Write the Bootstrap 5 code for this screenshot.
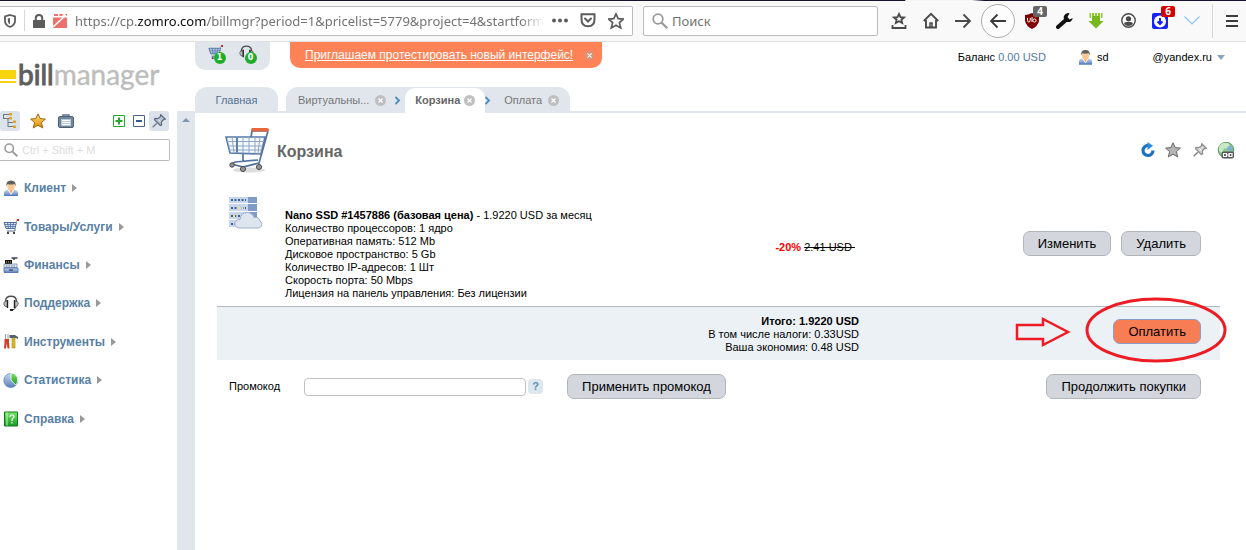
<!DOCTYPE html>
<html lang="ru">
<head>
<meta charset="utf-8">
<meta name="viewport" content="width=device-width, initial-scale=1">
<title>Корзина — billmanager</title>
<link rel="stylesheet" href="https://cdn.jsdelivr.net/npm/bootstrap@5.3.0/dist/css/bootstrap.min.css">
<style>
:root { --panel: #e1e6ed; --blue: #587fa6; }
body { font: 11px/13px "Liberation Sans", Arial, sans-serif; color: #000; background: #fff; }
svg { display: block; flex: none; }
button { color: inherit; }
.plain { border: 0; background: none; padding: 0; display: flex; align-items: center; justify-content: center; }

/* browser toolbar */
.chrome { height: 42px; background: #f9f9fa; border-bottom: 1px solid #dfdfe0; font: 13px/20px "Noto Sans", sans-serif; color: #737373; position: relative; }
.strip { position: absolute; top: 0; left: 0; right: 0; height: 1px; background: linear-gradient(90deg, #15142c 72.6%, #f5f5f5 72.7% 78%, #15142c 79%); }
.urlbox { height: 30px; background: #fff; border: 1px solid #bcbcbc; border-left: 0; border-radius: 0 2px 2px 0; min-width: 0; }
.findbox { height: 30px; width: 235px; flex: none; margin: 0 5px 0 10px; background: #fff; border: 1px solid #bcbcbc; border-radius: 2px; }
.findbox input { font: inherit; border: 0; outline: 0; background: none; min-width: 0; padding: 0; }
.findbox input::placeholder { color: #737373; opacity: 1; }
.address { font-size: 13px; white-space: nowrap; overflow: hidden; min-width: 0; -webkit-mask-image: linear-gradient(90deg, #000 95%, transparent); mask-image: linear-gradient(90deg, #000 95%, transparent); }
.address b { font-weight: 400; color: #0c0c0d; }
.rule { width: 1px; height: 34px; background: #d7d7db; flex: none; }
.tool { width: 32px; height: 34px; flex: none; color: #4a4a4a; position: relative; }
.tool-back { width: 37px; }
.tool-menu { width: 29px; }
.tool-back span { width: 34px; height: 34px; border: 1px solid #adadad; border-radius: 50%; background: #fdfdfd; display: flex; align-items: center; justify-content: center; }
.count { position: absolute; top: 2px; right: 1px; width: 14px; height: 11px; border-radius: 2px; background: #666; color: #fff; font: 700 10px/11px "Noto Sans", sans-serif; text-align: center; }
.count-red { background: #d70000; }

/* left side */
.side { width: 195px; flex: none; }
.brand { height: 69px; font: 28px/32px Lato, sans-serif; color: #bdbdbd; text-decoration: none; padding-top: 16px; -webkit-text-stroke: 0.4px #bdbdbd; }
.brand b { font-weight: 400; color: #5e5e5e; -webkit-text-stroke: 1px #5e5e5e; }
.brand i { width: 16px; height: 13px; margin: 12px 2px 0 0; background: linear-gradient(#f8d40f 9px, #fff 9px 11px, #f8d40f 11px); }
.splitter { width: 18px; background: var(--panel); }
.splitter::before { content: ""; display: block; width: 0; margin: 7px 5px; border: 4px solid transparent; border-top: 0; border-bottom-color: #7f97b5; }
.sq { width: 20px; height: 20px; border-radius: 3px; }
.sq-on { background: #dbe2eb; }
.lookup { height: 22px; width: 170px; border: 1px solid #bababa; border-left: 0; border-radius: 0 2px 2px 0; }
.lookup input { border: 0; outline: 0; width: 130px; font: inherit; }
.lookup input::placeholder { color: #dcdcdc; opacity: 1; }
.menu { height: 269px; display: grid; grid-auto-rows: 1fr; }
.menu a { color: var(--blue); font: 700 12px/16px "Liberation Sans", Arial, sans-serif; text-decoration: none; height: 100%; padding-left: 3px; }
.menu svg { width: 16px; margin-right: 5px; }
.menu a::after { content: ""; border: 4px solid transparent; border-left: 5px solid #999; border-right: 0; margin-left: 6px; }

/* top of the main area */
.topbar { height: 45px; }
.pill { width: 75px; height: 28px; background: var(--panel); border-radius: 0 0 10px 10px; }
.pill span { position: absolute; left: 6px; top: 7px; width: 12px; height: 12px; border-radius: 50%; background: #1fae2b; color: #fff; font: 700 8px/12px "DejaVu Sans", sans-serif; text-align: center; }
.notice { height: 26px; background: #ff8357; border-radius: 0 0 10px 10px; padding: 0 8px 0 15px; margin-left: 20px; gap: 12px; }
.notice a { color: #fff; font-size: 12px; }
.account { height: 30px; padding-right: 21px; }
.account a { color: #000; text-decoration: none; }
.account a.sum { color: #54789f; }
.account .who { margin: 0 44px 0 32px; }
.caret { border: 4px solid transparent; border-top: 5px solid #8ba5c0; border-bottom: 0; margin-left: 5px; }
.tabs { height: 26px; box-shadow: inset 0 -2px var(--panel); }
.tab, .tabset { background: var(--panel); border-radius: 12px 12px 0 0; height: 26px; }
.tab { width: 83px; }
.tab a, .tabset a { color: #777; text-decoration: none; }
.tab a { color: #54718f; }
.tabset { padding: 0 11px 0 12px; }
.tabset .close-tab { margin-left: 6px; }
.tabset .now { background: #fff; border-radius: 10px 10px 0 0; height: 25px; width: 80px; margin-top: 1px; }
.tabset .now a { font-weight: 700; color: #666; }

/* cart */
.page { padding: 14px 26px 0 22px; }
h1 { font: 700 16px/20px "Liberation Sans", Arial, sans-serif; color: #666; margin: 4px 0 0; }
.tools-right { margin-right: -15px; }
.cart { width: 100%; table-layout: fixed; }
.cart td { padding: 0; }
.cart .goods td { border-bottom: 1px solid #b4b9be; }
.cart .total td { background: #ecf1f6; padding: 8px 0 6px; }
.cart .desc { padding: 28px 0 6px; white-space: nowrap; }
.cart .discount { color: #f00; }
.cart .pay { padding-right: 19px !important; }
.cart .total .pay { padding: 5px 0 9px; }
.goods .buttons { gap: 10px; }
.act { height: 25px; border: 1px solid #b0b6ba; border-radius: 7px; background: #d3d7dd; font-size: 13px; line-height: 15px; padding: 0 14px; color: #000; }
.act-main { background: #f67d54; border-color: #8a9cc8; }
.pay-box { position: relative; display: inline-block; }
.pay-box svg { position: absolute; right: -27px; top: -22px; pointer-events: none; }
.promo-row { padding: 14px 19px 0 12px; }
.promo { width: 222px; height: 18px; border: 1px solid #c2c2c2; border-radius: 4px; }
.hint { width: 15px; height: 15px; margin-left: 2px; border-radius: 4px; background: #dce7ee; color: #5b92b8; font-weight: 700; }
</style>
</head>
<body class="d-flex flex-column min-vh-100">

<svg width="0" height="0" class="position-absolute" aria-hidden="true">
  <defs>
    <linearGradient id="gb" x2="0" y2="1"><stop stop-color="#c8d8ee"/><stop offset="1" stop-color="#5b80bb"/></linearGradient>
    <linearGradient id="gg" x2="0" y2="1"><stop stop-color="#7be56a"/><stop offset="1" stop-color="#159a25"/></linearGradient>
    <linearGradient id="gy" x2="0" y2="1"><stop stop-color="#ffe27a"/><stop offset="1" stop-color="#d98a00"/></linearGradient>
  </defs>
  <symbol id="user" viewBox="0 0 16 16"><path d="M1 16v-3q0-3 4-3.500h6q4 .5 4 3.500v3z" fill="url(#gb)"/><path d="M4.500 9.500 8 15l3.500-5.500z" fill="#fff"/><path d="M6 9.500 8 14l2-4.500z" fill="#f3a765"/><ellipse cx="8" cy="6" rx="3.800" ry="4.800" fill="#f9c896"/><path d="M3.500 6.500Q2.500.5 8 .5t4.500 6L11.500 4Q8 5 4.500 4z" fill="#60605c"/><path d="M1 15h14v1H1z" fill="#4c7cc0"/></symbol>
  <symbol id="basket" viewBox="0 0 16 16"><path d="M13 3 14.500.8" stroke="#99a" fill="none"/><path d="M14 0h2v2h-2z" fill="#c22"/><path d="M1 3.500h12.500L12 9.500H3z" fill="#dce7f5" stroke="#4c6ca0"/><path d="M1.500 5.500h11.500M2.500 7.500h10M4.500 3.500l1 6M7.500 3.500v6M10.500 3.500l-1 6" stroke="#4c6ca0" stroke-width=".8"/><path d="M12 9.500v2.500H4" stroke="#53658a" fill="none"/><path d="M4 13h2v2H4zM10 13h2v2h-2z" fill="#444"/></symbol>
  <symbol id="phones" viewBox="0 0 16 16"><path d="M2.500 9V6Q3 1.200 8 1.200T13.500 6v3" fill="none" stroke="#4b4b4b" stroke-width="1.400"/><path d="M4.500 6Q.5 6 .8 9t3.700 3zM11.500 6q4 0 3.700 3t-3.700 3z" fill="#b8bcc0" stroke="#333" stroke-width=".6"/><path d="M4.500 5v8M11.500 5v8" stroke="#222" stroke-width="1.400"/><path d="M13 12q-1 3-4.500 3" fill="none" stroke="#444"/><path d="M7 14h3v2H7z" fill="#222"/></symbol>
  <symbol id="star5" viewBox="0 0 16 16"><path d="M8 .8 10.200 5.600l5.200.5-4 3.500 1.300 5.300L8 12.200l-4.700 2.700 1.300-5.300-4-3.500 5.200-.5z"/></symbol>
  <symbol id="pin" viewBox="0 0 16 16"><path d="M.8 15.200 5.500 10.500" stroke="#777f88" stroke-width="1.600"/><path d="M10 .8 15.200 6l-2 .3-2.600 2.800.4 3.400-1.500.7-6.700-6.700.7-1.500 3.400.4 2.800-2.600z" stroke-width="1.400"/><path d="m7 6 3 3" stroke="#fff" stroke-width=".8"/></symbol>
  <symbol id="cross" viewBox="0 0 11 11"><circle cx="5.500" cy="5.500" r="5.500" fill="#bfbfbf"/><path d="m3.500 3.500 4 4m0-4-4 4" stroke="#fff" stroke-width="1.300"/></symbol>
  <symbol id="lens" viewBox="0 0 16 16"><circle cx="6" cy="6" r="4.800" fill="none" stroke="#999" stroke-width="1.800"/><path d="m9.500 9.500 5.700 5.700" stroke="#999" stroke-width="2.200"/></symbol>
</svg>

<header class="chrome d-flex align-items-center">
  <div class="strip"></div>
  <div class="urlbox d-flex align-items-center flex-grow-1">
    <svg class="ms-1" width="12" height="14" viewBox="0 0 12 14"><path d="M6 1 11 2.500V7q0 4-5 6-5-2-5-6V2.500z" fill="none" stroke="#5c5c5c" stroke-width="1.800"/><path d="M6 4v6.500Q3.800 9 3.800 7V4.500z" fill="#5c5c5c"/></svg>
    <span class="rule ms-2 h-75"></span>
    <svg class="ms-2" width="12" height="14" viewBox="0 0 12 14"><path d="M0 6h12v8H0z" fill="#5c5c5c"/><path d="M2.800 7V4Q2.800 1 6 1t3.200 3v3" fill="none" stroke="#5c5c5c" stroke-width="2"/></svg>
    <svg class="mx-2" width="14" height="14" viewBox="0 0 14 14"><path d="M0 3.500h14V14H0zM1 0h4v2H1zM6.500 0h4l-1.500 2h-2.500zM12 0h2v2h-2z" fill="#ea716c"/><path d="M0 13 13 1" stroke="#fff" stroke-width="1.600"/></svg>
    <div class="address flex-grow-1" role="textbox" aria-label="Адрес">https://cp.<b>zomro.com</b>/billmgr?period=1&amp;pricelist=5779&amp;project=4&amp;startform</div>
    <button class="plain ms-2" aria-label="Действия"><svg width="16" height="5" viewBox="0 0 16 5" fill="#5c5c5c"><circle cx="2" cy="2.500" r="2"/><circle cx="8" cy="2.500" r="2"/><circle cx="14" cy="2.500" r="2"/></svg></button>
    <button class="plain mx-2 px-1" aria-label="Pocket"><svg width="16" height="15" viewBox="0 0 16 15" fill="none" stroke="#5c5c5c" stroke-width="2" stroke-linecap="round"><path d="M1.500 1.200h13v5q0 7-6.500 7t-6.500-7z"/><path d="m5 5.500 3 3 3-3"/></svg></button>
    <button class="plain me-2" aria-label="Закладка"><svg width="16" height="16" viewBox="0 0 16 16"><use href="#star5" fill="none" stroke="#5c5c5c" stroke-width="1.700"/></svg></button>
  </div>
  <label class="findbox d-flex align-items-center">
    <svg class="ms-2 me-1" width="16" height="16"><use href="#lens"/></svg>
    <input type="text" placeholder="Поиск" aria-label="Поиск" size="15">
  </label>
  <button class="plain tool" aria-label="Библиотека"><svg width="16" height="18" viewBox="0 0 16 18" fill="none" stroke="#4a4a4a" stroke-width="1.800"><path d="m8 2 1.500 3.200 3.500.3-2.600 2.200.8 3.300L8 9.200 4.800 11l.8-3.300L3 5.500l3.500-.3z"/><path d="M1.500 13v3h13v-3"/></svg></button>
  <button class="plain tool" aria-label="Домой"><svg width="16" height="17" viewBox="0 0 16 17" fill="none" stroke="#4a4a4a" stroke-width="1.900"><path d="M.8 9 8 1.800 15.200 9M3 8v7.500h10V8"/><path d="M7 15.500v-4.500h2v4.500" stroke-width="1.500"/></svg></button>
  <button class="plain tool" aria-label="Вперёд"><svg width="16" height="16" viewBox="0 0 16 16" fill="none" stroke="#4a4a4a" stroke-width="1.900"><path d="M0 8h15M8.500 1.500 15 8l-6.500 6.500"/></svg></button>
  <button class="plain tool tool-back" aria-label="Назад"><span><svg width="16" height="16" viewBox="0 0 16 16" fill="none" stroke="#3c3c3c" stroke-width="1.900"><path d="M16 8H1M7.500 1.500 1 8l6.500 6.500"/></svg></span></button>
  <button class="plain tool" aria-label="uBlock"><svg width="14" height="16" viewBox="0 0 14 16"><path d="M7 0q4 2 7 2v6q-1 5-7 8-6-3-7-8V2q3 0 7-2z" fill="#800000"/><path d="M2.500 5v2.500q0 1.500 1.300 1.500T5.200 7.500V5M7 4v5" stroke="#fff" fill="none"/><circle cx="9.500" cy="7.500" r="1.600" fill="none" stroke="#fff"/></svg><span class="count">4</span></button>
  <button class="plain tool" aria-label="Инструменты"><svg width="17" height="16" viewBox="0 0 17 16"><path d="M2 14 10.500 6.500" stroke="#111" stroke-width="4" stroke-linecap="round"/><path d="M13.500.3A4.500 4.500 0 1 0 16.700 5L13.500 6.500 11.500 4z" fill="#111"/></svg></button>
  <button class="plain tool" aria-label="Загрузка"><svg width="16" height="16" viewBox="0 0 16 16"><path d="M4 3h8v5h3.500L8 15.500.5 8H4z" fill="#77b81e"/><path d="M1.500 0H3v5H1.500zM4 0h2v3H4zM7 0h2v3H7zM10 0h2v3h-2zM13 0h1.500v5H13z" fill="#8bcc2c"/></svg></button>
  <button class="plain tool" aria-label="Аккаунт"><svg width="15" height="15" viewBox="0 0 15 15"><circle cx="7.500" cy="7.500" r="6.700" fill="none" stroke="#4a4a4a" stroke-width="1.400"/><circle cx="7.500" cy="5.800" r="2.600" fill="#4a4a4a"/><path d="M3 11q0-2 2.500-2h4q2.500 0 2.500 2-2 2-4.500 2T3 11z" fill="#4a4a4a"/></svg></button>
  <button class="plain tool" aria-label="Менеджер загрузок"><svg width="16" height="16" viewBox="0 0 16 16"><rect width="16" height="16" rx="2" fill="#1422f5"/><circle cx="8" cy="8.500" r="6" fill="#fff"/><path d="M8 5v5M5.500 8.500 8 11l2.500-2.500" stroke="#1422f5" stroke-width="2" fill="none"/></svg><span class="count count-red">6</span></button>
  <button class="plain tool" aria-label="Ещё"><svg width="16" height="9" viewBox="0 0 16 9"><path d="m.5.5 7.500 7.500L15.500.5" fill="none" stroke="#86c6ee" stroke-width="1.200"/></svg></button>
  <span class="rule mx-1"></span>
  <button class="plain tool tool-menu" aria-label="Меню"><svg width="12" height="12" viewBox="0 0 12 12"><path d="M0 1h12M0 6h12M0 11h12" stroke="#3c3c3c" stroke-width="1.800"/></svg></button>
</header>

<div class="d-flex flex-grow-1">
  <aside class="side d-flex flex-column">
    <a class="brand d-flex align-items-start" href="#"><i></i><b>bill</b>manager</a>
    <div class="d-flex flex-grow-1">
      <div class="flex-grow-1">
        <div class="d-flex align-items-center mb-2">
          <button class="plain sq sq-on" aria-label="Дерево"><svg width="15" height="16" viewBox="0 0 15 16"><path d="M.5 1v5M1 1.500h5M1 5.500h5M5 6v8M5 9.500h5M5 13.500h5" stroke="#6c7884" fill="none"/><path d="M6 0h3v2.500H6zM6 4h3v2.500H6zM10 7.500h3V10h-3zM10 12.500h3V15h-3z" fill="#e3a51c"/></svg></button>
          <button class="plain sq mx-2" aria-label="Избранное"><svg width="16" height="16"><use href="#star5" fill="url(#gy)" stroke="#9b6510"/></svg></button>
          <button class="plain sq" aria-label="Задачи"><svg width="16" height="14" viewBox="0 0 16 14"><path d="M5 3V1h6v2" fill="none" stroke="#5d7186" stroke-width="1.400"/><rect x=".5" y="2.500" width="15" height="11" rx="1.500" fill="#71869b" stroke="#4e6276"/><path d="M3 5h10v7H3z" fill="#b6c8da"/><path d="M4 6.500h8M4 8.500h8M4 10.500h8" stroke="#fff"/></svg></button>
          <button class="plain sq ms-auto" aria-label="Развернуть"><svg width="12" height="12" viewBox="0 0 12 12"><path d="M.5.5h11v11H.5z" fill="#fff" stroke="#22a92a"/><path d="M6 2.500v7M2.500 6h7" stroke="#22a92a" stroke-width="2"/></svg></button>
          <button class="plain sq" aria-label="Свернуть"><svg width="12" height="12" viewBox="0 0 12 12"><path d="M.5.5h11v11H.5z" fill="#fff" stroke="#44648f"/><path d="M3 6h6" stroke="#34588c" stroke-width="2"/></svg></button>
          <button class="plain sq sq-on me-2" aria-label="Закрепить"><svg width="14" height="14"><use href="#pin" fill="#b8c4d2" stroke="#586a80"/></svg></button>
        </div>
        <label class="lookup d-flex align-items-center ps-1 mb-2">
          <svg width="14" height="14" class="me-1"><use href="#lens"/></svg>
          <input class="p-0" type="text" placeholder="Ctrl + Shift + M" aria-label="Поиск по меню">
        </label>
        <nav>
          <ul class="menu list-unstyled m-0">
            <li><a class="d-flex align-items-center" href="#"><svg width="16" height="16"><use href="#user"/></svg>Клиент</a></li>
            <li><a class="d-flex align-items-center" href="#"><svg width="16" height="16"><use href="#basket"/></svg>Товары/Услуги</a></li>
            <li><a class="d-flex align-items-center" href="#"><svg width="16" height="16" viewBox="0 0 14 16"><path d="M10 3V1.500M7.500 1h6" stroke="#445" stroke-width="1.600"/><path d="M1 3h7v4H1z" fill="#111"/><path d="M2 5h5" stroke="#e8c94c" stroke-dasharray="1 1"/><path d="M0 7h13v3.500H0z" fill="#e6ebf3" stroke="#6a7fa4" stroke-width=".7"/><path d="M2 9h10" stroke="#5b6e94" stroke-dasharray="1.500 1"/><path d="M0 11h14v4.500H0z" fill="url(#gb)" stroke="#4268a5" stroke-width=".8"/><path d="M5 13h4" stroke="#223"/></svg>Финансы</a></li>
            <li><a class="d-flex align-items-center" href="#"><svg width="16" height="16"><use href="#phones"/></svg>Поддержка</a></li>
            <li><a class="d-flex align-items-center" href="#"><svg width="16" height="16" viewBox="0 0 14 16"><path d="M1.500 0v6M4 0v6" stroke="#8ea0b5"/><path d="M.5 5h4.500v3l.5 6.500H3.500L2.800 9 2 14.500H0L.5 8z" fill="#d83b28"/><path d="M5.500 1H11l3 2v2l-2-1H5.500z" fill="#556170"/><path d="M8 4h3v10H8z" fill="#d9bd1e" stroke="#a68a10" stroke-width=".6"/></svg>Инструменты</a></li>
            <li><a class="d-flex align-items-center" href="#"><svg width="16" height="16" viewBox="0 0 14 16"><circle cx="6.800" cy="8.500" r="7" fill="url(#gb)" stroke="#4672b4" stroke-width=".6"/><path d="M7 8V1q6.500.5 6.700 7 0 3-2 5z" fill="url(#gg)" stroke="#fff" stroke-width=".8"/></svg>Статистика</a></li>
            <li><a class="d-flex align-items-center" href="#"><svg width="16" height="16" viewBox="0 0 14 16"><path d="M.5 1h13v14H.5z" fill="url(#gg)" stroke="#0f7d1c"/><path d="M3 1.500v13" stroke="#c7f3c2"/><path d="M6 6q0-2 2-2t2 1.700q0 1-1 1.600T8 9v1M8 11v1.500" fill="none" stroke="#fff" stroke-width="1.200"/></svg>Справка</a></li>
          </ul>
        </nav>
      </div>
      <div class="splitter"></div>
    </div>
  </aside>

  <main class="flex-grow-1">
    <div class="topbar d-flex align-items-start">
      <div class="pill d-flex align-items-center justify-content-center gap-3 pe-1 pb-2">
        <a class="position-relative" href="#" aria-label="Корзина, 1"><svg width="15" height="15"><use href="#basket"/></svg><span>1</span></a>
        <a class="position-relative" href="#" aria-label="Поддержка, 0"><svg width="15" height="15"><use href="#phones"/></svg><span>0</span></a>
      </div>
      <div class="notice d-flex align-items-center">
        <a href="#">Приглашаем протестировать новый интерфейс!</a>
        <button class="plain" aria-label="Закрыть"><svg width="9" height="9" viewBox="0 0 11 11"><circle cx="5.500" cy="5.500" r="5.500" fill="#d3937c"/><path d="m3 3 5 5m0-5-5 5" stroke="#fff" stroke-width="1.300"/></svg></button>
      </div>
      <div class="account d-flex align-items-center ms-auto">
        <span>Баланс <a class="sum" href="#">0.00 USD</a></span>
        <a class="who d-flex align-items-center gap-1" href="#"><svg width="15" height="16"><use href="#user"/></svg>sd</a>
        <a class="d-flex align-items-center" href="#">@yandex.ru<span class="caret"></span></a>
      </div>
    </div>

    <nav class="tabs d-flex">
      <div class="tab d-flex align-items-center justify-content-center me-2"><a href="#">Главная</a></div>
      <div class="tabset d-flex align-items-center">
        <a href="#">Виртуальны...</a>
        <button class="plain close-tab" aria-label="Закрыть"><svg width="11" height="11"><use href="#cross"/></svg></button>
        <svg class="ms-2 me-1" width="7" height="9" viewBox="0 0 7 9"><path d="m1.500 1 3.500 3.500L1.500 8" fill="none" stroke="#4a8dbd" stroke-width="1.800"/></svg>
        <div class="now d-flex align-items-center justify-content-center gap-1"><a href="#">Корзина</a><button class="plain" aria-label="Закрыть"><svg width="11" height="11"><use href="#cross"/></svg></button></div>
        <svg width="7" height="9" viewBox="0 0 7 9"><path d="m.5 1 3.500 3.500L.5 8" fill="none" stroke="#4a8dbd" stroke-width="1.800"/></svg>
        <a class="ms-2 ps-1" href="#">Оплата</a>
        <button class="plain close-tab" aria-label="Закрыть"><svg width="11" height="11"><use href="#cross"/></svg></button>
      </div>
    </nav>

    <div class="page">
      <div class="d-flex align-items-center ps-2">
        <svg width="44" height="46" viewBox="0 0 44 46">
          <ellipse cx="24" cy="43" rx="16" ry="2.500" fill="#ddd"/>
          <path d="M1 10 40 10 36 27 5 26z" fill="#f4f8fc" stroke="#5878a8" stroke-width="1.600"/>
          <path d="M12 10v16M18 10v16.500M24 10v16.500M30 10v16.500M35 10l-2 16.500M7 10l2 16M2 14.500h37M3 19h35M4 23h33" stroke="#8ea6c8" fill="none"/>
          <path d="M12 10.500v15" stroke="#5878a8" stroke-width="1.800"/>
          <path d="M43 4 34 36 18 40 7 37 10 35l23-2M18 27v8M43 4H27l-1 6" stroke="#54729f" stroke-width="1.700" fill="none"/>
          <path d="M27 1h15q2 0 2 2t-2 1.500H27Q25 3 27 1z" fill="#e8663c"/>
          <g fill="#999" stroke="#444"><circle cx="7" cy="38" r="2.200"/><circle cx="18" cy="42" r="2.500"/><circle cx="34" cy="40" r="2.500"/></g>
        </svg>
        <h1 class="ms-2">Корзина</h1>
        <div class="tools-right d-flex align-items-center ms-auto gap-2">
          <button class="plain" aria-label="Обновить"><svg width="18" height="16" viewBox="0 0 18 16"><path d="M14 8.500A5 5 0 1 1 9.500 3.500" fill="none" stroke="#1b73c4" stroke-width="3.200"/><path d="M8.500 0 14 3.800 8.500 8z" fill="#2b8be0"/></svg></button>
          <button class="plain" aria-label="В избранное"><svg width="18" height="16"><use href="#star5" x="0" width="16" height="16" fill="#b4b4b4" stroke="#666"/></svg></button>
          <button class="plain" aria-label="Закрепить"><svg width="18" height="14"><use href="#pin" x="2" width="14" height="14" fill="#d3d3d3" stroke="#8a8a8a"/></svg></button>
          <button class="plain" aria-label="Ссылка"><svg width="18" height="17" viewBox="0 0 18 17"><circle cx="9" cy="8" r="7.700" fill="#8fc98a" stroke="#4f9c55"/><path d="M6 1q5-1 7 2l-4 4-2-1-2 5-3-2Q1 3 6 1z" fill="#c9e8c5"/><path d="m9 7 4-4 3 4v3z" fill="#7fb0d8"/><rect x="4.500" y="9.500" width="12.500" height="7" rx="2" fill="#555"/><path d="M6.500 11.500h3v3h-3zM12 11.500h3v3h-3zM9 13h4" fill="#555" stroke="#fff" stroke-width="1.200"/></svg></button>
        </div>
      </div>

      <table class="cart mt-2">
        <colgroup><col style="width:68px"><col><col style="width:16%"><col style="width:36%"></colgroup>
        <tbody>
          <tr class="goods">
            <td class="align-top ps-2 pt-3">
              <svg class="ms-1" width="34" height="32" viewBox="0 0 34 32">
                <path d="M0 0h19v6H0zM0 7h19v7H0zM0 15h19v7H0zM0 23h19v7H0z" fill="#c6d5ea"/><path d="M19 0h9v6h-9zM19 7h9v7h-9zM19 15h9v7h-9zM19 23h9v7h-9z" fill="#7f9cc6"/>
                <path d="M2 3h15M2 11h15M2 19h15M2 27h15" stroke="#3d5f93" stroke-width="2" stroke-dasharray="2 1.500"/><path d="M9 11h5M4 19h4" stroke="#f0e27c" stroke-width="2" stroke-dasharray="2 1.500"/>
                <path d="M10 31q-5-1-4-5.500 1-3.500 5-3 1-7 7-7 5 0 7 5 5-1 6 3.500 3 2 1.500 5Q31.500 31 29 31z" fill="#dde5ef" stroke="#9fb2ca"/>
              </svg>
            </td>
            <td class="desc"><b>Nano SSD #1457886 (базовая цена)</b> - 1.9220 USD за месяц<br>Количество процессоров: 1 ядро<br>Оперативная память: 512 Mb<br>Дисковое пространство: 5 Gb<br>Количество IP-адресов: 1 Шт<br>Скорость порта: 50 Mbps<br>Лицензия на панель управления: Без лицензии</td>
            <td class="text-end pt-2 pe-1"><b class="discount">-20%</b> <del>2.41 USD&nbsp;</del></td>
            <td class="pay"><div class="buttons d-flex justify-content-end"><button class="act">Изменить</button><button class="act">Удалить</button></div></td>
          </tr>
          <tr class="total">
            <td colspan="3" class="text-end"><b>Итого: 1.9220 USD</b><br>В том числе налоги: 0.33USD<br>Ваша экономия: 0.48 USD</td>
            <td class="pay text-end"><div class="pay-box"><button class="act act-main">Оплатить</button>
              <svg width="214" height="66" viewBox="0 0 214 66" fill="none" stroke="#ed1c24" stroke-width="3"><ellipse cx="142" cy="33" rx="69" ry="31"/><path d="M3 28h26v-6l25 13-25 13v-6H3z" stroke-width="2.500"/></svg>
            </div></td>
          </tr>
        </tbody>
      </table>

      <form class="promo-row d-flex align-items-center">
        <label for="promo">Промокод</label>
        <input class="promo ms-4" id="promo" type="text">
        <button type="button" class="plain hint" aria-label="Подсказка">?</button>
        <button type="button" class="act ms-4">Применить промокод</button>
        <button type="button" class="act ms-auto">Продолжить покупки</button>
      </form>
    </div>
  </main>
</div>
<script src="https://cdn.jsdelivr.net/npm/bootstrap@5.3.0/dist/js/bootstrap.bundle.min.js"></script>
</body>
</html>
